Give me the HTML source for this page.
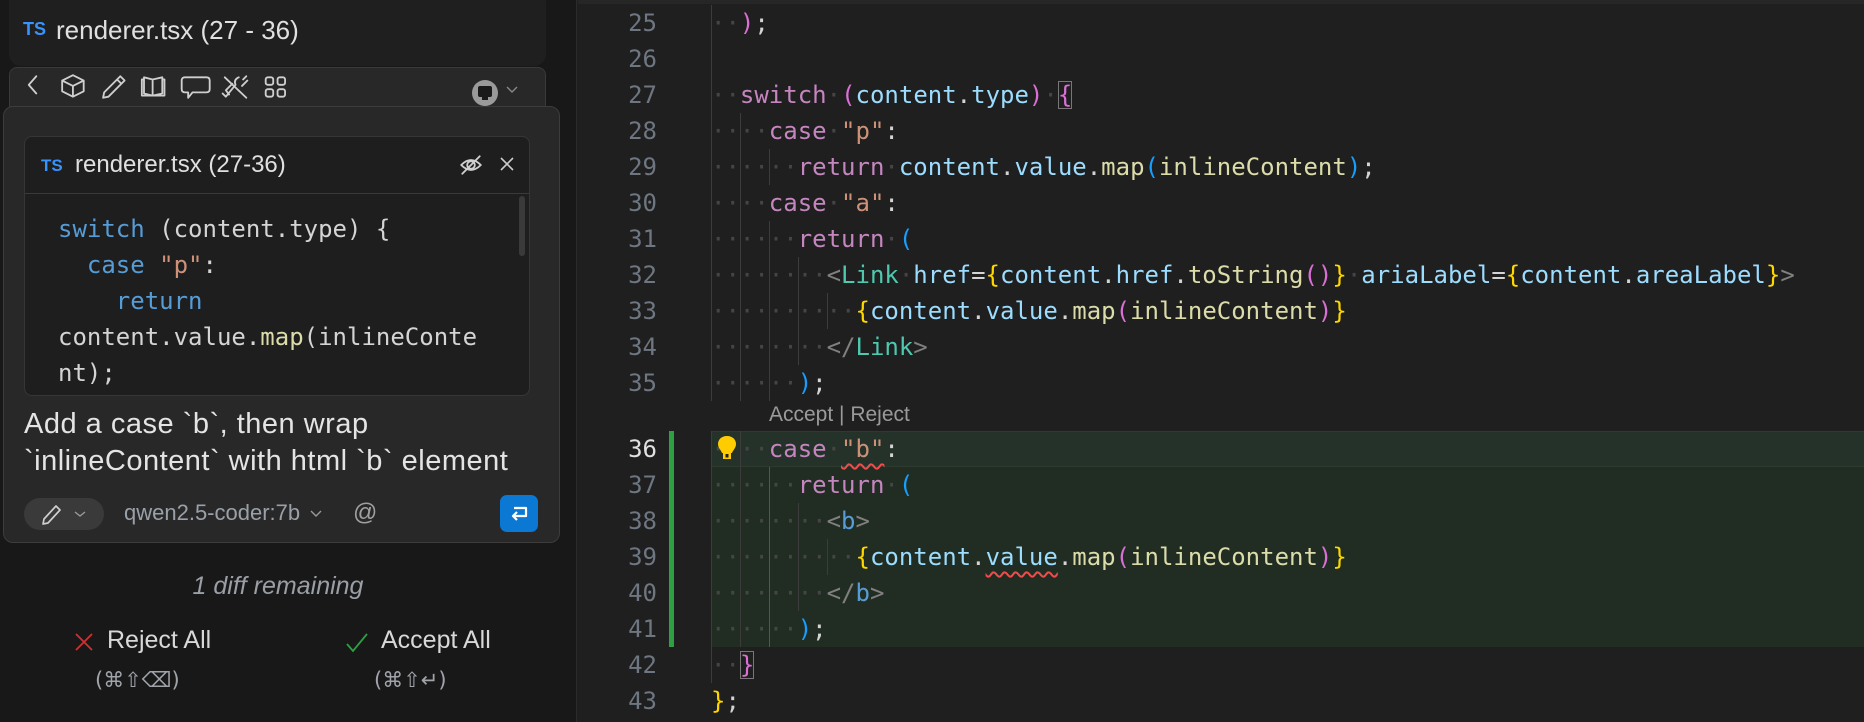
<!DOCTYPE html>
<html><head><meta charset="utf-8">
<style>
*{margin:0;padding:0;box-sizing:border-box}
body{width:1864px;height:722px;overflow:hidden;background:#1f1f1f;font-family:"Liberation Sans",sans-serif;position:relative}
.abs{position:absolute}
#left{left:0;top:0;width:577px;height:722px;background:#181818;border-right:1px solid #2b2b2b}
.mono{font-family:"DejaVu Sans Mono","Liberation Mono",monospace}
.code{font-size:24px;line-height:36px;white-space:pre;color:#d4d4d4}
.k{color:#c586c0}.v{color:#9cdcfe}.s{color:#ce9178}.f{color:#dcdcaa}
.y{color:#ffd700}.m{color:#da70d6}.b{color:#179fff}.t{color:#4ec9b0}.tb{color:#569cd6}.g{color:#808080}
.d{color:#454545}
.sq{text-decoration:underline wavy #f14c4c;text-underline-offset:6px;text-decoration-thickness:1.5px}
.box{outline:1.5px solid #777;outline-offset:-1px}
.ln{position:absolute;width:80px;left:577px;text-align:right;font-size:24px;line-height:36px;color:#6e7681}
.cl{position:absolute;left:711px}
.gd{position:absolute;width:1px;background:#3c3c3c}
.ic{stroke:#cfcfcf;fill:none;stroke-width:1.7;stroke-linecap:round;stroke-linejoin:round}
</style></head><body>
<div class="abs" style="left:578px;top:0;width:1286px;height:4px;background:#262626"></div>

<div id="left" class="abs">
  <div class="abs" style="left:9px;top:-10px;width:537px;height:76px;background:#1f1f1f;border-radius:12px"></div>
  <div class="abs" style="left:23px;top:19px;font-size:18px;font-weight:bold;color:#3794ff">TS</div>
  <div class="abs" style="left:56px;top:15px;font-size:26px;color:#e0e0e0">renderer.tsx (27 - 36)</div>

  <div class="abs" style="left:9px;top:67px;width:537px;height:60px;background:#282828;border:1px solid #3a3a3a;border-radius:8px"></div>
  <svg class="abs" style="left:18px;top:70px" width="280" height="34" viewBox="0 0 260 30">
    <path class="ic" d="M17 5 L10 13 L17 21"/>
    <path class="ic" d="M51 4 L61 9 L61 19 L51 24 L41 19 L41 9 Z M41 9 L51 14 L61 9 M51 14 L51 24"/>
    <path class="ic" d="M79 25 L80 20 L95 5 L99 9 L84 24 Z M92 8 L96 12"/>
    <path class="ic" d="M117 6 L125 8 L125 23 L117 21 Z M125 8 L134 6 L134 21 L125 23 M117 8 L115 8 L115 23 L136 23 L136 8 L134 8"/>
    <path class="ic" d="M155 6 L175 6 Q178 6 178 9 L178 17 Q178 20 175 20 L162 20 L158 25 L158 20 L155 20 Q152 20 152 17 L152 9 Q152 6 155 6 Z"/>
    <path class="ic" d="M192 6 L212 25 M199 12 L193 18 L196 22 M205 6 Q200 8 202 13 L193 24 L190 21 M208 14 L213 9 M212 5 L209 8"/>
    <rect class="ic" x="230" y="6" width="7" height="7" rx="2"/><rect class="ic" x="241" y="6" width="7" height="7" rx="2"/>
    <rect class="ic" x="230" y="17" width="7" height="7" rx="2"/><rect class="ic" x="241" y="17" width="7" height="7" rx="2"/>
  </svg>
  <div class="abs" style="left:472px;top:80px;width:26px;height:26px;border-radius:50%;background:#9a9a9a"></div>
  <div class="abs" style="left:478px;top:86px;width:14px;height:11px;background:#1a1a1a;border-radius:2px"></div>
  <div class="abs" style="left:482px;top:97px;width:6px;height:3px;background:#1a1a1a"></div>
  <svg class="abs" style="left:506px;top:86px" width="12" height="8"><path d="M1 1 L6 6 L11 1" stroke="#888" fill="none" stroke-width="1.4"/></svg>

  <div class="abs" style="left:3px;top:106px;width:557px;height:437px;background:#282828;border:1px solid #3c3c3c;border-radius:10px"></div>
  <div class="abs" style="left:24px;top:136px;width:506px;height:260px;background:#1e1e1e;border:1px solid #363636;border-radius:8px;overflow:hidden">
    <div class="abs" style="left:0;top:56px;width:506px;height:1px;background:#3a3a3a"></div>
    <div class="abs" style="left:16px;top:19px;font-size:17px;font-weight:bold;color:#3794ff">TS</div>
    <div class="abs" style="left:50px;top:14px;font-size:24px;color:#e0e0e0">renderer.tsx (27-36)</div>
    <svg class="abs" style="left:434px;top:16px" width="24" height="24" viewBox="0 0 22 22"><path class="ic" d="M2 11 Q11 2 20 11 Q11 20 2 11 Z"/><circle class="ic" cx="11" cy="11" r="3.5"/><path class="ic" d="M3 19 L19 3"/></svg>
    <svg class="abs" style="left:474px;top:19px" width="16" height="16"><path d="M2 2 L14 14 M14 2 L2 14" stroke="#ccc" stroke-width="1.6"/></svg>
    <div class="abs" style="left:494px;top:59px;width:6px;height:60px;background:#3a3a3a;border-radius:3px"></div>
    <div class="abs mono code" style="left:33px;top:74px;font-size:24px"><span class="tb">switch</span> (content.type) {
  <span class="tb">case</span> <span class="s">"p"</span>:
    <span class="tb">return</span>
content.value.<span class="f">map</span>(inlineConte
nt);</div>
  </div>
  <div class="abs" style="left:24px;top:406px;font-size:29px;line-height:37px;color:#e4e4e4;white-space:pre;letter-spacing:0.5px">Add a case `b`, then wrap
`inlineContent` with html `b` element</div>
  <div class="abs" style="left:24px;top:498px;width:80px;height:32px;background:#3a3a3a;border-radius:16px"></div>
  <svg class="abs" style="left:40px;top:502px" width="56" height="24"><path class="ic" d="M3 22 L4 17 L16 4 L20 8 L8 21 Z"/><path d="M35 10 L40 14 L45 10" stroke="#999" fill="none" stroke-width="1.4"/></svg>
  <div class="abs" style="left:124px;top:500px;font-size:22px;color:#9aa0a8">qwen2.5-coder:7b</div>
  <svg class="abs" style="left:310px;top:510px" width="12" height="8"><path d="M1 1 L6 6 L11 1" stroke="#999" fill="none" stroke-width="1.4"/></svg>
  <div class="abs" style="left:353px;top:499px;font-size:24px;color:#a0a0a0">@</div>
  <div class="abs" style="left:500px;top:495px;width:38px;height:37px;background:#0b78d4;border-radius:7px"></div>
  <svg class="abs" style="left:506px;top:500px" width="26" height="26"><path d="M8 8 L20 8 L20 16 L7 16 M11 12 L7 16 L11 20" stroke="#fff" fill="none" stroke-width="2.2" stroke-linejoin="round"/></svg>

  <div class="abs" style="left:0;width:556px;top:572px;text-align:center;font-size:25px;font-style:italic;color:#9a9fa6">1 diff remaining</div>
  <svg class="abs" style="left:74px;top:632px" width="20" height="20"><path d="M2 2 L18 18 M18 2 L2 18" stroke="#d0302f" stroke-width="1.8"/></svg>
  <div class="abs" style="left:107px;top:626px;font-size:25px;color:#d8d8d8">Reject All</div>
  <svg class="abs" style="left:345px;top:632px" width="24" height="22"><path d="M2 12 L8 19 L22 2" stroke="#2ea043" fill="none" stroke-width="1.8"/></svg>
  <div class="abs" style="left:381px;top:626px;font-size:25px;color:#d8d8d8">Accept All</div>
  <div class="abs" style="left:95px;top:668px;font-size:21px;color:#a0a4aa;font-family:'DejaVu Sans',sans-serif">(⌘⇧⌫)</div>
  <div class="abs" style="left:374px;top:668px;font-size:21px;color:#a0a4aa;font-family:'DejaVu Sans',sans-serif">(⌘⇧↵)</div>
</div>

<div class="abs" style="left:711px;top:431px;width:1153px;height:216px;background:#212d22"></div>
<div class="abs" style="left:711px;top:431px;width:1153px;height:36px;background:#25322a;border-top:1px solid #2d3b2f;border-bottom:1px solid #2d3b2f"></div>
<div class="abs" style="left:669px;top:431px;width:5px;height:216px;background:#2ea043"></div>

<div class="gd" style="left:711px;top:5px;height:396px"></div>
<div class="gd" style="left:711px;top:431px;height:252px"></div>
<div class="gd" style="left:740px;top:113px;height:288px"></div>
<div class="gd" style="left:740px;top:431px;height:216px"></div>
<div class="gd" style="left:769px;top:149px;height:36px"></div>
<div class="gd" style="left:769px;top:221px;height:180px"></div>
<div class="gd" style="left:769px;top:467px;height:180px;background:#555"></div>
<div class="gd" style="left:798px;top:257px;height:108px"></div>
<div class="gd" style="left:798px;top:503px;height:108px"></div>
<div class="gd" style="left:827px;top:293px;height:36px"></div>
<div class="gd" style="left:827px;top:539px;height:36px"></div>

<div class="ln mono" style="top:5px">25</div>
<div class="ln mono" style="top:41px">26</div>
<div class="ln mono" style="top:77px">27</div>
<div class="ln mono" style="top:113px">28</div>
<div class="ln mono" style="top:149px">29</div>
<div class="ln mono" style="top:185px">30</div>
<div class="ln mono" style="top:221px">31</div>
<div class="ln mono" style="top:257px">32</div>
<div class="ln mono" style="top:293px">33</div>
<div class="ln mono" style="top:329px">34</div>
<div class="ln mono" style="top:365px">35</div>
<div class="ln mono" style="top:431px;color:#e0e0e0">36</div>
<div class="ln mono" style="top:467px">37</div>
<div class="ln mono" style="top:503px">38</div>
<div class="ln mono" style="top:539px">39</div>
<div class="ln mono" style="top:575px">40</div>
<div class="ln mono" style="top:611px">41</div>
<div class="ln mono" style="top:647px">42</div>
<div class="ln mono" style="top:683px">43</div>

<div class="cl mono code" style="top:5px"><span class="d">··</span><span class="m">)</span>;</div>
<div class="cl mono code" style="top:77px"><span class="d">··</span><span class="k">switch</span><span class="d">·</span><span class="m">(</span><span class="v">content</span>.<span class="v">type</span><span class="m">)</span><span class="d">·</span><span class="m box">{</span></div>
<div class="cl mono code" style="top:113px"><span class="d">····</span><span class="k">case</span><span class="d">·</span><span class="s">"p"</span>:</div>
<div class="cl mono code" style="top:149px"><span class="d">······</span><span class="k">return</span><span class="d">·</span><span class="v">content</span>.<span class="v">value</span>.<span class="f">map</span><span class="b">(</span><span class="f">inlineContent</span><span class="b">)</span>;</div>
<div class="cl mono code" style="top:185px"><span class="d">····</span><span class="k">case</span><span class="d">·</span><span class="s">"a"</span>:</div>
<div class="cl mono code" style="top:221px"><span class="d">······</span><span class="k">return</span><span class="d">·</span><span class="b">(</span></div>
<div class="cl mono code" style="top:257px"><span class="d">········</span><span class="g">&lt;</span><span class="t">Link</span><span class="d">·</span><span class="v">href</span>=<span class="y">{</span><span class="v">content</span>.<span class="v">href</span>.<span class="f">toString</span><span class="m">()</span><span class="y">}</span><span class="d">·</span><span class="v">ariaLabel</span>=<span class="y">{</span><span class="v">content</span>.<span class="v">areaLabel</span><span class="y">}</span><span class="g">&gt;</span></div>
<div class="cl mono code" style="top:293px"><span class="d">··········</span><span class="y">{</span><span class="v">content</span>.<span class="v">value</span>.<span class="f">map</span><span class="m">(</span><span class="f">inlineContent</span><span class="m">)</span><span class="y">}</span></div>
<div class="cl mono code" style="top:329px"><span class="d">········</span><span class="g">&lt;/</span><span class="t">Link</span><span class="g">&gt;</span></div>
<div class="cl mono code" style="top:365px"><span class="d">······</span><span class="b">)</span>;</div>
<div class="abs" style="left:769px;top:402px;font-size:21px;line-height:26px;color:#9a9a9a">Accept | Reject</div>
<div class="cl mono code" style="top:431px"><span class="d">····</span><span class="k">case</span><span class="d">·</span><span class="s sq">"b"</span>:</div>
<svg class="abs" style="left:717px;top:435px" width="20" height="26" viewBox="0 0 20 26"><path d="M10 1 C4 1 1 5 1 9 C1 13 4 15 5 18 L15 18 C16 15 19 13 19 9 C19 5 16 1 10 1 Z" fill="#ffcc00"/><rect x="6" y="18" width="8" height="6" fill="#ffcc00"/><rect x="8.5" y="19" width="3" height="3.5" fill="#222"/></svg>
<div class="cl mono code" style="top:467px"><span class="d">······</span><span class="k">return</span><span class="d">·</span><span class="b">(</span></div>
<div class="cl mono code" style="top:503px"><span class="d">········</span><span class="g">&lt;</span><span class="tb">b</span><span class="g">&gt;</span></div>
<div class="cl mono code" style="top:539px"><span class="d">··········</span><span class="y">{</span><span class="v">content</span>.<span class="v sq">value</span>.<span class="f">map</span><span class="m">(</span><span class="f">inlineContent</span><span class="m">)</span><span class="y">}</span></div>
<div class="cl mono code" style="top:575px"><span class="d">········</span><span class="g">&lt;/</span><span class="tb">b</span><span class="g">&gt;</span></div>
<div class="cl mono code" style="top:611px"><span class="d">······</span><span class="b">)</span>;</div>
<div class="cl mono code" style="top:647px"><span class="d">··</span><span class="m box">}</span></div>
<div class="cl mono code" style="top:683px"><span class="y">}</span>;</div>
</body></html>
